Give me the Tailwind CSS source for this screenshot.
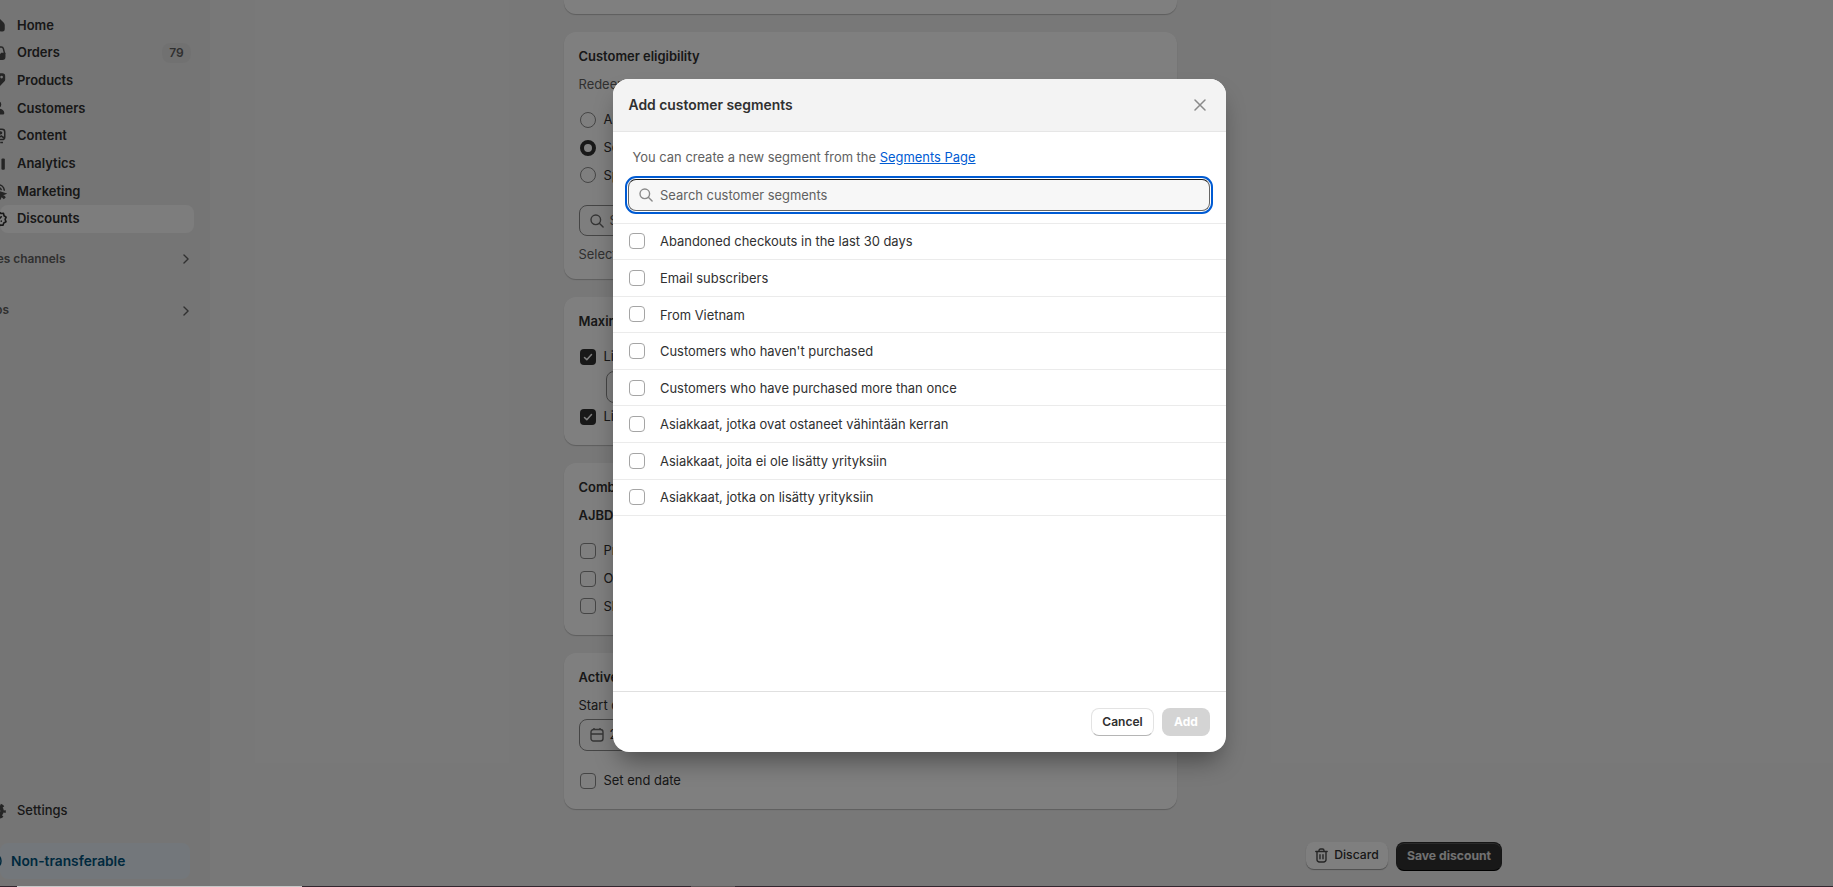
<!DOCTYPE html>
<html lang="en">
<head>
  <meta charset="UTF-8" />
  <title>Discounts</title>
  <script src="https://cdn.jsdelivr.net/npm/@tailwindcss/browser@4"></script>
</head>
<body class="relative h-[887px] w-[1833px] overflow-hidden bg-[#f1f1f1] font-['Inter',sans-serif] text-[12.95px] text-[#303030]">

  <div class="flex h-[886px]">
    <!-- Sidebar -->
    <aside class="flex w-[210px] shrink-0 flex-col bg-[#ebebeb] pt-[11px] font-semibold">
      <nav>
        <a class="flex h-[27.7px] items-center">
          <svg class="-ml-[11px] mr-[10px] size-[18px] shrink-0" viewBox="0 0 20 20" fill="#4a4a4a"><path d="M8.3 2.8a2.5 2.5 0 0 1 3.4 0l4.5 4.3c.8.8 1.3 1.9 1.3 3v4.6a2.5 2.5 0 0 1-2.5 2.5h-1.5a1.5 1.5 0 0 1-1.5-1.5v-3h-4v3a1.5 1.5 0 0 1-1.5 1.5H5a2.5 2.5 0 0 1-2.5-2.5v-4.6c0-1.1.5-2.2 1.3-3z"/></svg>
          <span class="mt-px">Home</span>
        </a>
        <a class="flex h-[27.7px] items-center">
          <svg class="-ml-[11px] mr-[10px] size-[18px] shrink-0" viewBox="0 0 20 20" fill="none" stroke="#4a4a4a" stroke-width="1.6"><path d="M3 11l1.6-5.6A2.6 2.6 0 0 1 7 3.4h6.5A2.5 2.5 0 0 1 16 5.3l1.4 5.7"/><path d="M2.8 11h3.7l1.4 2h4.2l1.8-2.5h3.6v3.9a2.5 2.5 0 0 1-2.5 2.5H5.3a2.5 2.5 0 0 1-2.5-2.5z" fill="#4a4a4a"/></svg>
          <span class="mt-px">Orders</span>
          <span class="ml-auto mr-[19px] flex h-5 w-[29px] items-center justify-center rounded-lg bg-[#e3e3e3] text-[12px] text-[#616161]">79</span>
        </a>
        <a class="flex h-[27.7px] items-center">
          <svg class="-ml-[11px] mr-[10px] size-[18px] shrink-0" viewBox="0 0 20 20" fill="#4a4a4a"><path fill-rule="evenodd" d="M10.4 2.5h4.4A3.2 3.2 0 0 1 18 5.7v3.6a3.5 3.5 0 0 1-1 2.5l-5 5a2.7 2.7 0 0 1-3.8 0l-4.9-4.9a2.7 2.7 0 0 1 0-3.8l4.6-4.6a3.5 3.5 0 0 1 2.5-1zM14 8.2a1.5 1.5 0 1 0 0-3 1.5 1.5 0 0 0 0 3z"/></svg>
          <span class="mt-px">Products</span>
        </a>
        <a class="flex h-[27.7px] items-center">
          <svg class="-ml-[11px] mr-[10px] size-[18px] shrink-0" viewBox="0 0 20 20" fill="#4a4a4a"><circle cx="10" cy="6" r="3.6"/><path d="M3 15.5c0-3 3-4.8 7-4.8s7 1.8 7 4.8c0 1.1-.8 1.8-1.8 1.8H4.8c-1 0-1.8-.7-1.8-1.8z"/></svg>
          <span class="mt-px">Customers</span>
        </a>
        <a class="flex h-[27.7px] items-center">
          <svg class="-ml-[11px] mr-[10px] size-[18px] shrink-0" viewBox="0 0 20 20" fill="none" stroke="#4a4a4a" stroke-width="1.7"><rect x="3.5" y="2.5" width="14" height="11.5" rx="3"/><circle cx="13" cy="6.5" r="1"/><path d="M4 12l4-4 3.5 3.5 2-1.5 4 2.5M6 17.2h4m2.5 0h3"/></svg>
          <span class="mt-px">Content</span>
        </a>
        <a class="flex h-[27.7px] items-center">
          <svg class="-ml-[11px] mr-[10px] size-[18px] shrink-0" viewBox="0 0 20 20" fill="#4a4a4a"><rect x="3" y="9" width="3.5" height="8.5" rx="1.2"/><rect x="8.5" y="2.5" width="3.7" height="15" rx="1.2"/><rect x="13.8" y="5" width="3.8" height="12.5" rx="1.2"/></svg>
          <span class="mt-px">Analytics</span>
        </a>
        <a class="flex h-[27.7px] items-center">
          <svg class="-ml-[11px] mr-[10px] size-[18px] shrink-0" viewBox="0 0 20 20" fill="none" stroke="#4a4a4a" stroke-width="1.7" stroke-linecap="round"><path d="M9 17A7 7 0 1 1 17 9"/><path d="M8.5 13.3A3.7 3.7 0 1 1 13.5 8.5"/><path d="M10.5 10.5l7.5 2.5-3 1.3 2.5 2.7-1 1-2.7-2.5-1.3 2.7z" fill="#4a4a4a"/></svg>
          <span class="mt-px">Marketing</span>
        </a>
        <a class="mr-4 flex h-[27.7px] items-center rounded-lg bg-[#fafafa]">
          <svg class="-ml-[10px] mr-[9px] size-[18px] shrink-0" viewBox="0 0 20 20" fill="none" stroke="#303030" stroke-width="1.8" stroke-linejoin="round" stroke-linecap="round"><path d="M10 2.2l2.2 1.7 2.8-.2.6 2.7 2.3 1.6-1.1 2.5 1 2.6-2.5 1.3-.9 2.6-2.8-.3L10 18.2l-2-1.5-2.8.3-.8-2.7L2 12.8l1-2.5-1-2.5 2.4-1.5.7-2.6 2.800.2z"/><path d="M7.5 12.5l5-5M7.5 7.7v.1m5 4.5v.1"/></svg>
          <span class="mt-px">Discounts</span>
        </a>
      </nav>
      <div class="mt-[12px] flex h-[52px] items-start pr-[21px] text-[11.9px] text-[#616161]">
        <span class="-ml-[21px] mt-[5px]">Sales channels</span>
        <svg class="ml-auto mt-[9.5px] h-[10px] w-[6.5px]" viewBox="0 0 7 11" fill="none" stroke="#616161" stroke-width="1.5" stroke-linecap="round" stroke-linejoin="round"><path d="M1 1l4.500 4.500L1 10"/></svg>
      </div>
      <div class="flex items-start pr-[21px] text-[11.9px] text-[#616161]">
        <span class="-ml-[21px] mt-[4px]">Apps</span>
        <svg class="ml-auto mt-[9.5px] h-[10px] w-[6.5px]" viewBox="0 0 7 11" fill="none" stroke="#616161" stroke-width="1.5" stroke-linecap="round" stroke-linejoin="round"><path d="M1 1l4.500 4.500L1 10"/></svg>
      </div>
      <a class="mt-auto flex h-7 items-center font-medium">
        <svg class="-ml-[11px] mr-[10px] size-[18px] shrink-0" viewBox="0 0 20 20" fill="none" stroke="#4a4a4a"><circle cx="10" cy="10" r="4.5" stroke-width="4"/><circle cx="10" cy="10" r="7.2" stroke-width="3" stroke-dasharray="3.77 3.77" stroke-dashoffset="1.885"/></svg>
        Settings
      </a>
      <div class="mr-[20px] mt-[18px] mb-[7px] flex h-9 items-center rounded-lg bg-[#e6eff6] text-[13.75px] text-[#00527c]">
        <svg class="-ml-[14px] mr-[9px] size-4 shrink-0" viewBox="0 0 16 16" fill="none" stroke="#00527c" stroke-width="1.5"><circle cx="8" cy="8" r="7"/></svg>
        Non-transferable
      </div>
    </aside>

    <!-- Discount form -->
    <main class="ml-[354px] w-[613px]">
      <section class="h-[14px] rounded-b-xl bg-white shadow-[0_1px_1px_#bbb]"></section>

      <section class="mt-[18px] h-[247px] rounded-xl bg-white px-[14.5px] pt-[11px] shadow-[0_1px_1px_#bbb]">
        <h2 class="flex h-[28px] items-center font-semibold">Customer eligibility</h2>
        <p class="flex h-[27px] items-center text-[#616161]">Redeem</p>
        <div class="mt-[8px]">
          <label class="flex h-[27.7px] items-center gap-2"><span class="ml-px size-4 rounded-full border border-[#8a8a8a]"></span>All</label>
          <label class="flex h-[27.7px] items-center gap-2"><span class="ml-px size-4 rounded-full border-[4.5px] border-[#303030]"></span>Some</label>
          <label class="flex h-[27.7px] items-center gap-2"><span class="ml-px size-4 rounded-full border border-[#8a8a8a]"></span>Specific</label>
        </div>
        <div class="mt-4 flex h-[31px] items-center rounded-lg border border-[#8a8a8a] bg-[#fdfdfd] pl-2.5 text-[#616161]">
          <svg class="mr-[6px] size-[14px]" viewBox="0 0 14 14" fill="none" stroke="#6a6a6a" stroke-width="1.4" stroke-linecap="round"><circle cx="5.8" cy="5.8" r="4.8"/><path d="M9.3 9.3l3.8 3.8"/></svg>
          Search
        </div>
        <p class="mt-[9px] text-[#616161]">Select</p>
      </section>

      <section class="mt-[18px] h-[148px] rounded-xl bg-white px-[14.5px] pt-[11px] shadow-[0_1px_1px_#bbb]">
        <h2 class="flex h-[28px] items-center font-semibold">Maximum</h2>
        <label class="mt-[7px] flex h-[27.7px] items-center gap-2">
          <svg class="ml-px size-4" viewBox="0 0 16 16"><rect width="16" height="16" rx="4" fill="#303030"/><path d="M4.5 8.5l2.3 2.3 4.7-5.3" fill="none" stroke="#fff" stroke-width="1.5" stroke-linecap="round" stroke-linejoin="round"/></svg>
          Limit
        </label>
        <div class="ml-[27px] h-8 w-40 rounded-lg border border-[#8a8a8a]"></div>
        <label class="flex h-[27.7px] items-center gap-2">
          <svg class="ml-px size-4" viewBox="0 0 16 16"><rect width="16" height="16" rx="4" fill="#303030"/><path d="M4.5 8.5l2.3 2.3 4.7-5.3" fill="none" stroke="#fff" stroke-width="1.5" stroke-linecap="round" stroke-linejoin="round"/></svg>
          Limit
        </label>
      </section>

      <section class="mt-[18px] h-[172px] rounded-xl bg-white px-[14.5px] pt-[11px] shadow-[0_1px_1px_#bbb]">
        <h2 class="flex h-[28px] items-center font-semibold">Combinations</h2>
        <p class="flex h-[27px] items-center font-semibold">AJBD</p>
        <div class="mt-2">
          <label class="flex h-[27.7px] items-center gap-2"><span class="ml-px size-4 rounded border border-[#8a8a8a]"></span>Product</label>
          <label class="flex h-[27.7px] items-center gap-2"><span class="ml-px size-4 rounded border border-[#8a8a8a]"></span>Order</label>
          <label class="flex h-[27.7px] items-center gap-2"><span class="ml-px size-4 rounded border border-[#8a8a8a]"></span>Shipping</label>
        </div>
      </section>

      <section class="mt-[18px] h-[156px] rounded-xl bg-white px-[14.5px] pt-[11px] shadow-[0_1px_1px_#bbb]">
        <h2 class="flex h-[28px] items-center font-semibold">Active</h2>
        <p class="flex h-[27px] items-center">Start date</p>
        <div class="flex h-8 items-center rounded-lg border border-[#8a8a8a] bg-[#fdfdfd] pl-2.5">
          <svg class="mr-[6px] size-[14px]" viewBox="0 0 14 14" fill="none" stroke="#6a6a6a" stroke-width="1.4"><rect x="1" y="1.5" width="12" height="11.5" rx="2.5"/><path d="M1 6h12M4 0v2M10 0v2"/></svg>
          2024
        </div>
        <label class="mt-4 flex h-[27.7px] items-center gap-2"><span class="ml-px size-4 rounded border border-[#8a8a8a]"></span>Set end date</label>
      </section>
    </main>

    <div class="ml-auto mr-[331px] flex items-end gap-[8px] self-end pb-[15px] text-[12.2px] font-medium">
      <button class="mb-[2px] flex h-[27px] w-[82px] items-center justify-center gap-[6px] rounded-lg bg-white shadow-[0_1px_1px_#999]">
        <svg class="h-[15px] w-[13px]" viewBox="0 0 13 15" fill="none" stroke="#4a4a4a" stroke-width="1.4" stroke-linecap="round"><path d="M.8 3.5h11.4M4 3.3V2.5A1.5 1.5 0 0 1 5.5 1h2A1.5 1.5 0 0 1 9 2.500v.8M2 3.700v8a2.3 2.3 0 0 0 2.3 2.300h4.400a2.3 2.3 0 0 0 2.300-2.300v-8M5 6.800v4M8 6.800v4"/></svg>
        Discard
      </button>
      <button class="flex h-[29px] w-[106px] items-center justify-center rounded-lg border border-[#2c2c2c] border-b-black bg-[#303030] font-bold text-[#e3e3e3] shadow-[inset_0_1px_0_#555]">Save discount</button>
    </div>
  </div>

  <div class="absolute inset-0 bg-black/50"></div>

  <!-- Taskbar edge -->
  <div class="absolute inset-x-0 bottom-0 flex h-px bg-[#33272f]">
    <div class="ml-[17px] w-[285px] bg-[#c8c8c8]"></div>
    <div class="ml-[389px] w-[44px] bg-[#5e5658]"></div>
  </div>

  <!-- Add customer segments dialog -->
  <div role="dialog" class="absolute left-[612.5px] top-[79px] flex h-[672.5px] w-[613px] flex-col overflow-hidden rounded-2xl bg-white shadow-[0_14px_24px_-6px_rgba(0,0,0,0.4)]">
    <header class="flex h-[52.5px] shrink-0 items-center justify-between border-b border-[#e6e6e6] bg-[#f3f3f3] pl-4 pr-[20px]">
      <h2 class="mt-px text-[13.9px] font-semibold">Add customer segments</h2>
      <svg class="size-3" viewBox="0 0 12 12" fill="none" stroke="#8a8a8a" stroke-width="1.5" stroke-linecap="round"><path d="M1 1l10 10M11 1L1 11"/></svg>
    </header>
    <p class="mt-[16px] flex h-5 items-center whitespace-pre pl-5 text-[#616161]">You can create a new segment from the <a class="text-[#005bd3] underline">Segments Page</a></p>
    <div class="mr-4 ml-[15.5px] mt-[11px] flex h-[32px] shrink-0 items-center rounded-lg border border-[#666] border-t-[#1a1a1a] bg-[#f7f7f7] pl-[10px] text-[#616161] outline-2 outline-offset-1 outline-[#005bd3]">
      <svg class="mr-[7px] size-[14px]" viewBox="0 0 14 14" fill="none" stroke="#8a8a8a" stroke-width="1.4" stroke-linecap="round"><circle cx="5.8" cy="5.8" r="4.8"/><path d="M9.3 9.3l3.8 3.8"/></svg>
      <span class="mt-[2px]">Search customer segments</span>
    </div>
    <ul id="segments" class="mt-3 border-t border-[#ebebeb]"></ul>
    <footer class="mt-auto flex h-[61px] shrink-0 items-center justify-end gap-2 border-t border-[#e0e0e0] pr-4 text-[12px]">
      <button class="h-[28px] w-[63px] rounded-lg border border-[#e3e3e3] border-b-[#b5b5b5] bg-white pl-px font-semibold">Cancel</button>
      <button class="h-[28px] w-[48px] rounded-lg bg-[#d4d4d4] pl-px font-bold text-white">Add</button>
    </footer>
  </div>

  <script>
    const segments = [
      'Abandoned checkouts in the last 30 days',
      'Email subscribers',
      'From Vietnam',
      "Customers who haven't purchased",
      'Customers who have purchased more than once',
      'Asiakkaat, jotka ovat ostaneet vähintään kerran',
      'Asiakkaat, joita ei ole lisätty yrityksiin',
      'Asiakkaat, jotka on lisätty yrityksiin',
    ];

    const list = document.getElementById('segments');
    segments.forEach(name => {
      const row = document.createElement('li');
      row.className = 'flex h-[36.6px] items-center gap-[15.5px] border-b border-[#ebebeb] pl-4';
      const box = document.createElement('span');
      box.className = 'size-4 rounded border border-[#a5a5a5]';
      const label = document.createElement('span');
      label.className = 'mt-[1.5px]';
      label.textContent = name;
      row.append(box, label);
      list.appendChild(row);
    });
  </script>
</body>
</html>
